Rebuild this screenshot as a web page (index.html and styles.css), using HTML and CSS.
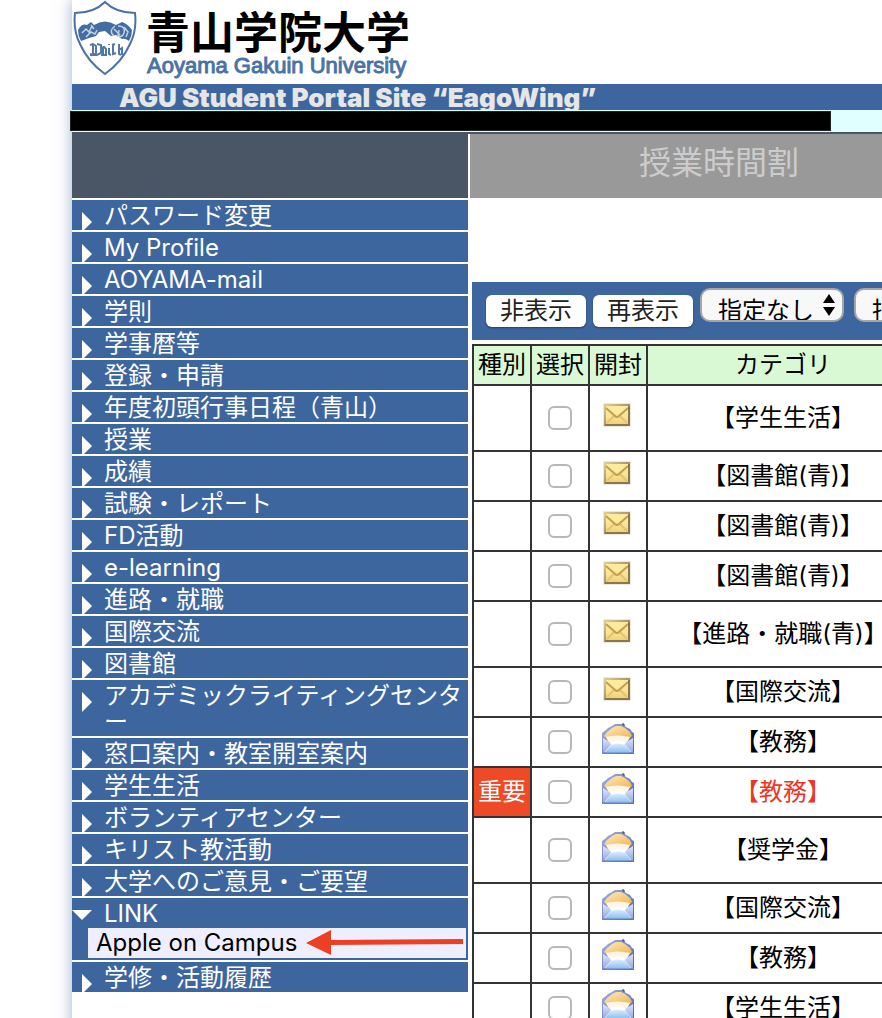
FILE: index.html
```html
<!DOCTYPE html>
<html lang="ja">
<head>
<meta charset="utf-8">
<title>AGU Student Portal Site</title>
<link rel="stylesheet" href="styles.css">
</head>
<body>
<svg class="sprites" aria-hidden="true">
  <defs>
    <linearGradient id="gold" x1="0" y1="0" x2="0" y2="1"><stop offset="0" stop-color="#fff0a2"/><stop offset=".6" stop-color="#f8e294"/><stop offset="1" stop-color="#f0cf76"/></linearGradient>
    <linearGradient id="goldEdge" x1="0" y1="0" x2="1" y2="1"><stop offset="0" stop-color="#dccb9c"/><stop offset="1" stop-color="#776035"/></linearGradient>
    <linearGradient id="flap" x1="0" y1="0" x2="1" y2="1"><stop offset="0" stop-color="#fdebc4"/><stop offset="1" stop-color="#f2b347"/></linearGradient>
    <linearGradient id="blueBody" x1="0" y1="0" x2="1" y2="1"><stop offset="0" stop-color="#a3b1da"/><stop offset="1" stop-color="#4c60b0"/></linearGradient>
    <linearGradient id="blueFront" x1="0" y1="0" x2="0" y2="1"><stop offset="0" stop-color="#f4fbff"/><stop offset="1" stop-color="#86bcf2"/></linearGradient>
    <linearGradient id="side" x1="0" y1="0" x2="0" y2="1"><stop offset="0" stop-color="#dfe6f8"/><stop offset="1" stop-color="#8ea6e2"/></linearGradient>
  </defs>
  <symbol id="mail-closed" viewBox="0 0 32 32">
    <rect x="1" y="4" width="28" height="24" rx="1" fill="#eee9df"/>
    <rect x="3" y="6" width="24" height="20" fill="url(#gold)" stroke="url(#goldEdge)" stroke-width="2"/>
    <path d="M5 24l7-7M25 24l-7-7" stroke="#e3c46f" stroke-width="2" fill="none"/>
    <path d="M4 9l9 8q2 2 4 0l9-8" stroke="#c39f50" stroke-width="2" fill="none"/>
    <path d="M5 7h20l-9 8h-2z" fill="#fbec9d"/>
    <path d="M3 26h24V7" stroke="#8b774e" stroke-width="2" fill="none"/>
  </symbol>
  <symbol id="mail-open" viewBox="0 0 32 32">
    <path d="M0 10l4-3 2-2 4-2 3-2h8l3 3 4 2 2 3 2 1v21H0z" fill="url(#blueBody)"/>
    <path d="M2 13l3-4 5-4 4-2h5l4 2 5 4 2 4-4 3H6z" fill="url(#flap)"/>
    <path d="M4 14q12-3 24 0l-3 6H7z" fill="#fff6e6"/>
    <path d="M1 30V15l8 5v3l-7 7zM31 30V15l-8 5v3l7 7z" fill="url(#side)"/>
    <path d="M3 30l7-9 3-3h6l3 3 7 9z" fill="url(#blueFront)"/>
    <path d="M8 19q8-3 16 0l-1 3q-7-3-14 0z" fill="#fff"/>
    <path d="M3 29l7-8M29 29l-7-8" fill="none" stroke="#e8f0ff"/>
    <path d="M0 30h32" stroke="#6f80c2"/>
    <path d="M20 1h2v2" stroke="#30385a" fill="none"/>
  </symbol>
</svg>
<div class="portal">
  <header class="brand">
    <svg class="crest" viewBox="0 0 64 76" aria-hidden="true">
      <path d="M32 2Q21 13 2 13Q0 30 7 44Q15 62 32 74Q49 62 57 44Q64 30 62 13Q43 13 32 2Z" fill="#fff" stroke="#4a72a5" stroke-width="2"/>
      <path d="M5 30Q9 23 14 25L18 22L21 25Q32 18 43 25L49 22Q55 24 59 30Q59 36 56 41Q52 38 49 39L43 35L38 36L32 31L26 32L23 36L16 38L8 41Q5 36 5 30Z" fill="#426ca2"/>
      <path d="M9 33l4-4 3 3 3-6M13 37l5-5 4 2 2-4M18 25l3 4" fill="none" stroke="#c3d2e4" stroke-width="1.500"/>
      <path d="M42 26q-7 5-1 10M45 26q8 0 6 7q-2 5-6 3l1-6M41 29l6 6M51 27l4 5-2 5" fill="none" stroke="#c3d2e4" stroke-width="1.500"/>
      <path d="M17 45l3-1 3 2v7l-3 2-3-1M20 45v9M24 44l4 1v8l-4 2M28 48l3-1 2 2v6M30 48v6M36 48v6l2 1M36 44v1M40 44v10l3-1M39 45l3-1M46 44v10l2 1M46 50l3-2v7M17 55h7M28 55h6" fill="none" stroke="#5278a6" stroke-width="2"/>
    </svg>
    <div class="names">
      <div class="name-ja">青山学院大学</div>
      <div class="name-en">Aoyama Gakuin University</div>
    </div>
  </header>
  <h1 class="site-title">AGU Student Portal Site “EagoWing”</h1>
  <div class="notice"><span class="notice-mask"></span></div>
  <div class="columns">
    <nav class="side">
      <div class="side-head"></div>
      <ul class="menu">
        <li><a href="#">パスワード変更</a></li>
        <li><a href="#">My Profile</a></li>
        <li><a href="#">AOYAMA-mail</a></li>
        <li><a href="#">学則</a></li>
        <li><a href="#">学事暦等</a></li>
        <li><a href="#">登録・申請</a></li>
        <li><a href="#">年度初頭行事日程（青山）</a></li>
        <li><a href="#">授業</a></li>
        <li><a href="#">成績</a></li>
        <li><a href="#">試験・レポート</a></li>
        <li><a href="#">FD活動</a></li>
        <li><a href="#">e-learning</a></li>
        <li><a href="#">進路・就職</a></li>
        <li><a href="#">国際交流</a></li>
        <li><a href="#">図書館</a></li>
        <li><a href="#">アカデミックライティングセンター</a></li>
        <li><a href="#">窓口案内・教室開室案内</a></li>
        <li><a href="#">学生生活</a></li>
        <li><a href="#">ボランティアセンター</a></li>
        <li><a href="#">キリスト教活動</a></li>
        <li><a href="#">大学へのご意見・ご要望</a></li>
        <li class="open"><a href="#">LINK</a>
          <div class="submenu"><a href="#">Apple on Campus</a>
            <svg class="pointer" viewBox="0 0 158 26" aria-hidden="true"><path d="M0 14L25 1V11L157 10V15L25 16V26Z" fill="#eb4024"/></svg>
          </div>
        </li>
        <li><a href="#">学修・活動履歴</a></li>
      </ul>
    </nav>
    <main class="main">
      <div class="tab"><a href="#">授業時間割</a></div>
      <div class="toolbar">
        <button type="button">非表示</button>
        <button type="button">再表示</button>
        <div class="picker"><select aria-label="絞り込み 1"><option>指定なし</option></select>
          <svg viewBox="0 0 12 24" aria-hidden="true"><path d="M6 1l6 9H0zM6 23l6-9H0z"/></svg></div>
        <div class="picker"><select aria-label="絞り込み 2"><option>指定なし</option></select>
          <svg viewBox="0 0 12 24" aria-hidden="true"><path d="M6 1l6 9H0zM6 23l6-9H0z"/></svg></div>
      </div>
      <table class="messages">
        <colgroup><col class="narrow"><col class="narrow"><col class="narrow"><col class="wide"></colgroup>
        <thead><tr><th>種別</th><th>選択</th><th>開封</th><th>カテゴリ</th></tr></thead>
        <tbody>
          <tr class="tall"><td></td><td><input type="checkbox" aria-label="選択"></td><td><svg class="mail"><use href="#mail-closed"/></svg></td><td>【学生生活】</td></tr>
          <tr><td></td><td><input type="checkbox" aria-label="選択"></td><td><svg class="mail"><use href="#mail-closed"/></svg></td><td>【図書館(青)】</td></tr>
          <tr><td></td><td><input type="checkbox" aria-label="選択"></td><td><svg class="mail"><use href="#mail-closed"/></svg></td><td>【図書館(青)】</td></tr>
          <tr><td></td><td><input type="checkbox" aria-label="選択"></td><td><svg class="mail"><use href="#mail-closed"/></svg></td><td>【図書館(青)】</td></tr>
          <tr class="tall"><td></td><td><input type="checkbox" aria-label="選択"></td><td><svg class="mail"><use href="#mail-closed"/></svg></td><td>【進路・就職(青)】</td></tr>
          <tr><td></td><td><input type="checkbox" aria-label="選択"></td><td><svg class="mail"><use href="#mail-closed"/></svg></td><td>【国際交流】</td></tr>
          <tr><td></td><td><input type="checkbox" aria-label="選択"></td><td><svg class="mail"><use href="#mail-open"/></svg></td><td>【教務】</td></tr>
          <tr class="urgent"><td class="flag">重要</td><td><input type="checkbox" aria-label="選択"></td><td><svg class="mail"><use href="#mail-open"/></svg></td><td>【教務】</td></tr>
          <tr class="tall"><td></td><td><input type="checkbox" aria-label="選択"></td><td><svg class="mail"><use href="#mail-open"/></svg></td><td>【奨学金】</td></tr>
          <tr><td></td><td><input type="checkbox" aria-label="選択"></td><td><svg class="mail"><use href="#mail-open"/></svg></td><td>【国際交流】</td></tr>
          <tr><td></td><td><input type="checkbox" aria-label="選択"></td><td><svg class="mail"><use href="#mail-open"/></svg></td><td>【教務】</td></tr>
          <tr><td></td><td><input type="checkbox" aria-label="選択"></td><td><svg class="mail"><use href="#mail-open"/></svg></td><td>【学生生活】</td></tr>
        </tbody>
      </table>
    </main>
  </div>
</div>
</body>
</html>
```
FILE: styles.css
```css
* { box-sizing: border-box; }
body {
  margin: 0;
  height: 100vh;
  overflow: hidden;
  background: #fff;
  color: #000;
  font-family: Inter, "Noto Sans CJK JP", sans-serif;
  font-size: 24px;
  line-height: 30px;
}
a { color: inherit; text-decoration: none; }
.sprites { position: absolute; width: 0; height: 0; }
.portal {
  margin-left: 72px;
  min-height: 100vh;
  background: #fff;
  box-shadow: 0 0 14px rgba(60, 100, 160, .5);
}
.brand { display: flex; gap: 9px; height: 84px; padding-left: 1px; }
.crest { width: 64px; height: 76px; flex: none; }
.names { white-space: nowrap; }
.name-ja {
  font-family: "Noto Sans CJK JP", sans-serif;
  font-size: 44px;
  font-weight: 700;
  line-height: 44px;
  padding-top: 8px;
}
.name-en {
  padding-left: 1px;
  font-family: "Liberation Sans", sans-serif;
  font-size: 22px;
  line-height: 28px;
  color: #4a73a5;
  -webkit-text-stroke: 1px #4a73a5;
}
.site-title {
  margin: 0;
  height: 26px;
  padding-left: 47px;
  background: #3d669e;
  color: #e6e6e6;
  font-size: 26px;
  font-weight: 900;
  line-height: 28px;
  white-space: nowrap;
}
.notice {
  position: relative;
  height: 24px;
  background: #e0ffff;
  border-bottom: 2px solid #4a5666;
}
.notice-mask {
  position: absolute;
  left: -2px;
  top: 1px;
  width: 761px;
  height: 20px;
  background: #000;
  border: 1px solid #1c2424;
}
.columns { display: flex; gap: 2px; }
.side { width: 396px; flex: none; }
.side-head { height: 64px; background: #4a5666; }
.menu { list-style: none; margin: 0; padding: 0; }
.menu li {
  position: relative;
  margin-top: 2px;
  overflow: hidden;
  background: #3d669e;
  color: #fff;
}
.menu li > a {
  display: block;
  padding: 3px 0 1px 32px;
  line-height: 26px;
}
.menu li::before {
  content: "";
  position: absolute;
  left: 10px;
  top: 12px;
  border: 10px solid transparent;
  border-left-color: #fff;
  border-right-width: 0;
}
.menu .open::before {
  left: 0;
  border: 10px solid transparent;
  border-top-color: #fff;
  border-bottom-width: 0;
}
.submenu {
  position: relative;
  margin: 0 2px 2px 16px;
  padding-left: 8px;
  background: #eef;
  color: #000;
}
.pointer { position: absolute; right: 2px; top: 0; width: 158px; height: 28px; }
.main { flex: 1; min-width: 0; overflow: hidden; }
.tab {
  min-width: 498px;
  height: 64px;
  background: #999;
  color: #ccc;
  font-size: 32px;
  line-height: 58px;
  text-align: center;
}
.toolbar {
  display: flex;
  min-width: 600px;
  height: 58px;
  margin: 84px 0 4px 2px;
  padding: 6px 14px;
  background: #3d669e;
}
.toolbar button {
  width: 100px;
  height: 32px;
  margin: 7px 7px 0 0;
  padding: 0;
  border: 0;
  border-radius: 6px;
  background: #fff;
  box-shadow: 0 1px 2px rgba(0, 0, 0, .4);
  color: #222;
  font: inherit;
  flex: none;
}
.picker { position: relative; width: 144px; margin-right: 10px; flex: none; }
.picker select {
  appearance: none;
  width: 100%;
  height: 34px;
  padding: 6px 16px 0;
  border: 2px solid #a6a6a6;
  border-radius: 10px;
  background: #f8f8f8;
  color: #000;
  font: inherit;
  line-height: 30px;
}
.picker svg { position: absolute; right: 9px; top: 5px; width: 12px; height: 24px; }
.messages {
  width: 446px;
  margin-left: 2px;
  table-layout: fixed;
  border-collapse: collapse;
  text-align: center;
}
.narrow { width: 58px; }
.wide { width: 272px; }
.messages th, .messages td {
  height: 50px;
  padding: 0;
  border: 2px solid #333;
  font-weight: 400;
  white-space: nowrap;
  line-height: 28px;
}
.messages th { height: 40px; background: #d8f9d4; }
.messages .tall td { height: 66px; }
.messages input {
  appearance: none;
  display: block;
  width: 24px;
  height: 24px;
  margin: 0 auto;
  border: 2px solid #b8b8b8;
  border-radius: 6px;
  background: #fff;
}
.mail { display: block; width: 32px; height: 32px; margin: 0 auto 6px; }
.urgent { color: #ee3524; }
.messages .flag { background: #ef4a27; color: #fff; }
```
